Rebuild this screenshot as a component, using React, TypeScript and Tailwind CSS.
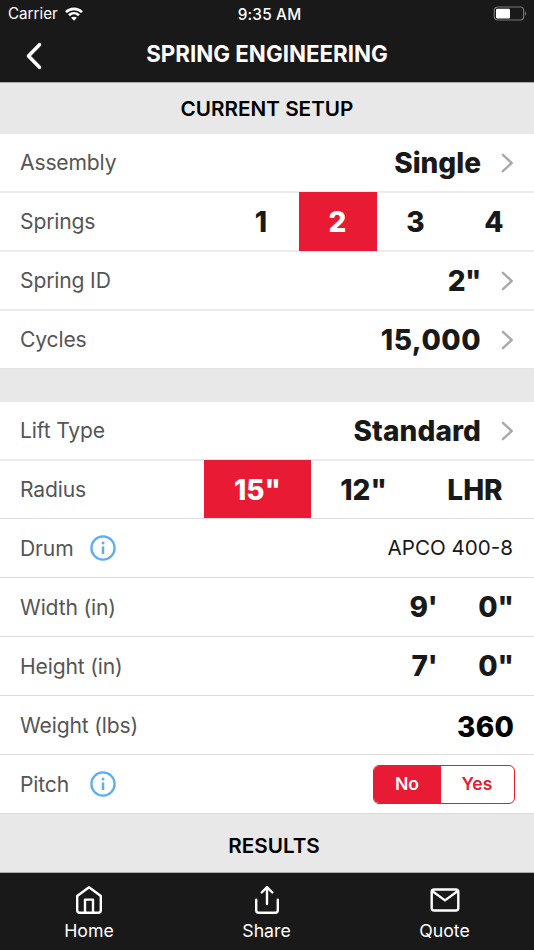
import type { ReactNode } from "react";

const Chevron = () => (
  <svg className="ml-[19px] mr-5 h-5 w-[14px] shrink-0" viewBox="0 0 14 20" fill="none" stroke="#a9a9a9" strokeWidth="2.4" strokeLinecap="round" strokeLinejoin="round">
    <path d="M2.9 1.8 L11.7 10 L2.9 18.2" />
  </svg>
);

const Info = () => (
  <svg className="h-[26px] w-[26px]" viewBox="0 0 26 26" fill="none">
    <circle cx="13" cy="13" r="11.6" stroke="#5badf8" strokeWidth="2.3" />
    <circle cx="13" cy="8" r="1.5" fill="#5badf8" />
    <path d="M13 11.4 V19" stroke="#5badf8" strokeWidth="2.5" />
  </svg>
);

type RowProps = { label: ReactNode; children: ReactNode; size?: string; info?: boolean };

function Row({ label, children, size = "h-[59px] border-b-2 border-[#ebebed]", info }: RowProps) {
  return (
    <div className={`flex shrink-0 items-stretch bg-white pl-5 ${size}`}>
      <div className="flex w-[70px] shrink-0 items-center whitespace-nowrap pt-px text-[21.1px] tracking-[-0.15px] text-[#555]">{label}</div>
      {info && <div className="flex items-center"><Info /></div>}
      <div className="flex flex-1 items-center justify-end text-[28px] font-extrabold text-[#191919]">{children}</div>
    </div>
  );
}

const thin = "h-[59px] border-b border-[#dcdce0]";

export default function App() {
  return (
    <div className="flex h-[950px] w-[534px] flex-col overflow-hidden bg-[#e8e8e8] font-['Inter',sans-serif]">
      <header className="h-[82px] shrink-0 bg-[#191919] text-white">
        <div className="grid h-7 grid-cols-3 items-center">
          <div className="flex items-center gap-[7px] pl-2 text-[15.2px]">
            <span className="pt-px">Carrier</span>
            <svg className="h-[14px] w-[18px]" viewBox="0 0 18 14" fill="none" stroke="white" strokeWidth="2.6">
              <path d="M1 5.1 C5.5 .8 12.5 .8 17 5.1" />
              <path d="M4 8.2 C6.9 5.5 11.1 5.5 14 8.2" />
              <path d="M9 13.7 L6.1 10.8 C7.7 9.3 10.3 9.3 11.9 10.8 Z" fill="white" stroke="none" />
            </svg>
          </div>
          <div className="pl-[5px] pt-[2px] text-center text-[15.3px] font-medium tracking-[0.2px]">9:35 AM</div>
          <svg className="mr-[6px] h-4 w-[35px] justify-self-end" viewBox="0 0 35 16" fill="none">
            <rect x="1.3" y="1" width="29.3" height="13" rx="3.2" stroke="#777" strokeWidth="1.2" />
            <rect x="3" y="2.7" width="14" height="9.7" rx="1.2" fill="white" />
            <path d="M32.2 5 Q34.6 7.5 32.2 10 Z" fill="#777" />
          </svg>
        </div>
        <div className="flex h-[54px] items-center">
          <svg className="ml-[25px] mt-px h-7 w-[18px]" viewBox="0 0 18 28" fill="none" stroke="white" strokeWidth="3.6" strokeLinecap="round" strokeLinejoin="round">
            <path d="M14.5 2.7 L3.5 14 L14.5 25.3" />
          </svg>
          <h1 className="mr-[43px] flex-1 pb-[2px] text-center text-[22.35px] font-bold">SPRING ENGINEERING</h1>
        </div>
      </header>
      <h2 className="flex h-[52px] shrink-0 items-center justify-center border-t border-[#aaa] text-[20.7px] font-semibold text-black">CURRENT SETUP</h2>

      <Row label="Assembly">Single<Chevron /></Row>
      <Row label="Springs">
        <span className="w-[78px] pl-[2px] text-center">1</span>
        <span className="-mt-px flex h-[59px] w-[78px] items-center justify-center self-start bg-[#e91a33] pr-px text-white">2</span>
        <span className="w-[78px] pr-px text-center">3</span>
        <span className="w-[79px] pr-px text-center">4</span>
      </Row>
      <Row label="Spring ID"><span className="tracking-[-0.5px]">2"</span><Chevron /></Row>
      <Row label="Cycles" size="h-[58px] border-b border-[#e2e2e3]"><span className="tracking-[0.5px]">15,000</span><Chevron /></Row>
      <div className="h-[33px] shrink-0" />
      <Row label="Lift Type"><span className="tracking-[0.1px]">Standard</span><Chevron /></Row>
      <Row label="Radius" size="h-[58px] border-b border-[#dedee1]">
        <span className="-mt-px flex w-[107px] items-center justify-center self-stretch bg-[#e91a33] pt-px text-white">15"</span>
        <span className="w-[105px] text-center">12"</span>
        <span className="w-[118px] text-center">LHR</span>
      </Row>
      <Row label="Drum" info size={thin}>
        <span className="mr-[21px] pt-px text-[20.6px] font-normal">APCO 400-8</span>
      </Row>
      <Row label="Width (in)" size={thin}>
        <span className="tracking-[-0.4px]">9'</span><span className="ml-[41px] mr-5">0"</span>
      </Row>
      <Row label="Height (in)" size={thin}>
        <span className="tracking-[-0.4px]">7'</span><span className="ml-[41px] mr-5">0"</span>
      </Row>
      <Row label="Weight (lbs)" size={thin}><span className="mr-5 pt-[3px] tracking-[0.2px] text-black">360</span></Row>
      <Row label="Pitch" info size={thin}>
        <div className="mr-[19.5px] flex h-[39px] w-[142px] overflow-hidden rounded-[6px] border-[1.5px] border-[#e91a33] text-[17.6px] font-semibold">
          <span className="flex w-[67px] items-center justify-center bg-[#e91a33] text-white">No</span>
          <span className="flex flex-1 items-center justify-center text-[#e91a33]">Yes</span>
        </div>
      </Row>
      <h2 className="flex h-[59px] shrink-0 items-center justify-center border-b border-[#aaa] pl-[14px] pt-[6px] text-[20.7px] font-semibold text-black">RESULTS</h2>

      <nav className="grid flex-1 grid-cols-3 bg-[#191919] text-[17.7px] text-white">
        <div className="flex flex-col items-center pt-3">
          <svg className="mb-px h-8 w-8" viewBox="0 0 32 32" fill="none" stroke="white" strokeWidth="2.4" strokeLinejoin="round">
            <path d="M4.2 11 L16 2.2 L27.8 11 V25.3 Q27.8 27.8 25.3 27.8 H6.7 Q4.2 27.8 4.2 25.3 Z" />
            <path d="M12 27.8 V14.6 H20 V27.8" />
          </svg>
          <span>Home</span>
        </div>
        <div className="flex flex-col items-center pr-px pt-3">
          <svg className="mb-px h-8 w-8" viewBox="0 0 32 32" fill="none" stroke="white" strokeWidth="2.4" strokeLinecap="round" strokeLinejoin="round">
            <path d="M5.2 14.7 V25.3 Q5.2 27.8 7.7 27.8 H24.3 Q26.8 27.8 26.8 25.3 V14.7" />
            <path d="M16 19 V2.2 M10.7 7.5 L16 2.2 L21.3 7.5" />
          </svg>
          <span>Share</span>
        </div>
        <div className="flex flex-col items-center pr-px pt-3">
          <svg className="mb-px h-8 w-8" viewBox="0 0 32 32" fill="none" stroke="white" strokeWidth="2.4" strokeLinecap="round" strokeLinejoin="round">
            <rect x="2.7" y="4.5" width="26.6" height="21" rx="2.5" />
            <path d="M3.2 6 L16 15.4 L28.8 6" />
          </svg>
          <span>Quote</span>
        </div>
      </nav>
    </div>
  );
}
